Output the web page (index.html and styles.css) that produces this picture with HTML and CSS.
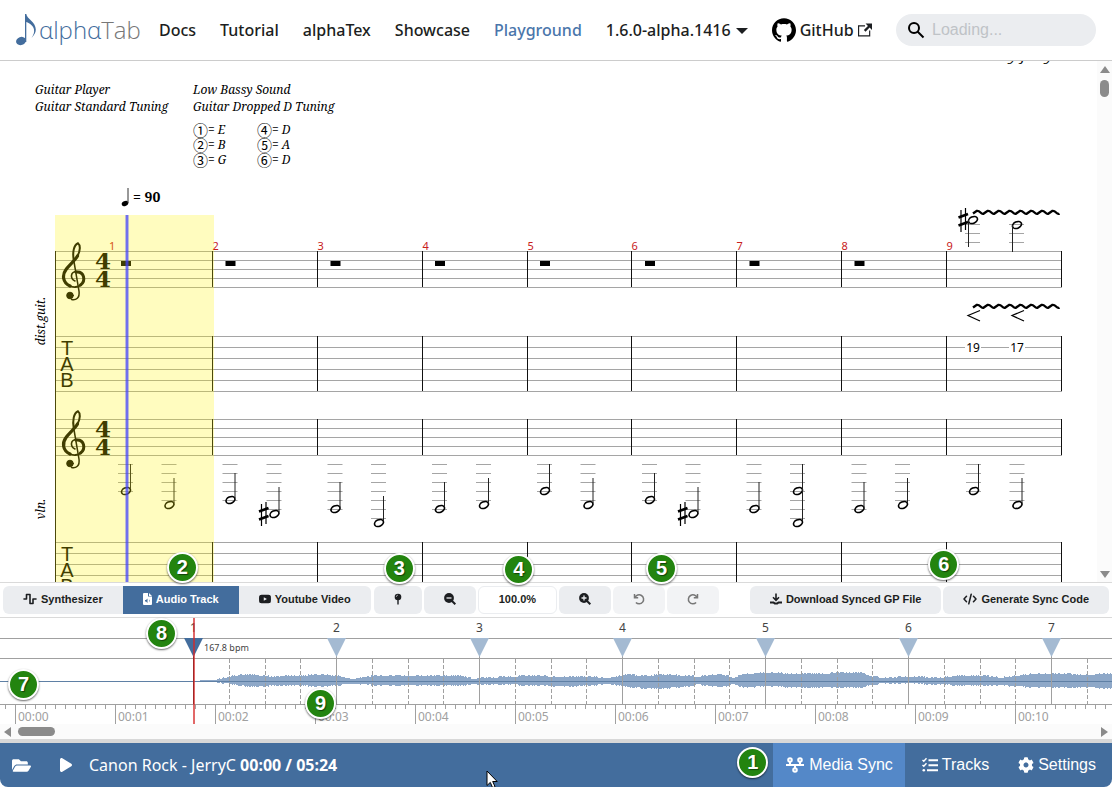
FILE: index.html
```html
<!DOCTYPE html>
<html lang="en">
  <head>
    <meta charset="UTF-8" />
    <meta name="viewport" content="width=device-width, initial-scale=1.0" />
    <title>Playground | alphaTab</title>
    <link rel="stylesheet" href="styles.css">
  </head>

  <body>
    <header class="navbar">
      <a class="logo" href="#">
        <svg width="23" height="34" viewBox="0 0 23 34">
          <ellipse cx="5" cy="28" rx="5" ry="4" transform="rotate(-20 5 28)" />
          <path d="M9 1h1.300c.5 5 9.500 8 9.500 15.500 0 3-1.500 5.500-4.300 8.500 2-3 3-5.500 2.500-8.500-.5-3.500-4-6-7.700-7.500V29H9z" />
        </svg>
        <span class="logo-alpha">αlphα</span><span class="logo-tab">Tab</span>
      </a>
      <nav>
        <a href="#">Docs</a>
        <a href="#">Tutorial</a>
        <a href="#">alphaTex</a>
        <a href="#">Showcase</a>
        <a class="active" href="#">Playground</a>
        <a class="dropdown" href="#">1.6.0-alpha.1416</a>
        <a class="github" href="#">
          <svg width="24" height="24" viewBox="0 0 24 24"><path fill="#000" d="M12 .297c-6.63 0-12 5.373-12 12 0 5.303 3.438 9.800 8.205 11.385.6.113.82-.258.82-.577 0-.285-.01-1.040-.015-2.040-3.338.724-4.042-1.610-4.042-1.610C4.422 18.070 3.633 17.700 3.633 17.700c-1.087-.744.084-.729.084-.729 1.205.084 1.838 1.236 1.838 1.236 1.070 1.835 2.809 1.305 3.495.998.108-.776.417-1.305.76-1.605-2.665-.3-5.466-1.332-5.466-5.930 0-1.310.465-2.380 1.235-3.220-.135-.303-.54-1.523.105-3.176 0 0 1.005-.322 3.300 1.230.96-.267 1.980-.399 3-.405 1.020.006 2.040.138 3 .405 2.280-1.552 3.285-1.230 3.285-1.230.645 1.653.24 2.873.12 3.176.765.84 1.230 1.910 1.230 3.220 0 4.610-2.805 5.625-5.475 5.920.42.36.81 1.096.81 2.220 0 1.606-.015 2.896-.015 3.286 0 .315.21.69.825.57C20.565 22.092 24 17.592 24 12.297c0-6.627-5.373-12-12-12" /></svg>
          GitHub
          <svg width="14" height="14" viewBox="0 0 24 24"><path fill="currentColor" d="M21 13v10h-21v-19h12v2h-10v15h17v-8h2zm3-12h-10.988l4.035 4-6.977 7.070 2.828 2.828 6.977-7.070 4.125 4.172v-11z" /></svg>
        </a>
      </nav>
      <div class="search">
        <svg width="18" height="18" viewBox="0 0 18 18" fill="none" stroke="#000" stroke-width="2"><circle cx="7" cy="7" r="5" /><path d="M10.500 10.500l6 6" /></svg>
        <input type="search" placeholder="Loading..." aria-label="Search" />
      </div>
    </header>

    <main class="viewer">
      <div class="score">
        <p class="score-author">Music by JerryC</p>
        <div class="score-info">
          <div>
            <p>Guitar Player</p>
            <p>Guitar Standard Tuning</p>
          </div>
          <div>
            <p>Low Bassy Sound</p>
            <p>Guitar Dropped D Tuning</p>
            <div class="tuning">
              <span><b>①</b>= E</span>
              <span><b>④</b>= D</span>
              <span><b>②</b>= B</span>
              <span><b>⑤</b>= A</span>
              <span><b>③</b>= G</span>
              <span><b>⑥</b>= D</span>
            </div>
          </div>
        </div>
        <svg id="notation" width="1097" height="402" viewBox="0 180 1097 402"></svg>
      </div>
      <div class="scrollbar-y">
        <i class="arrow up"></i>
        <i class="thumb"></i>
        <i class="arrow down"></i>
      </div>
    </main>

    <section class="sync">
      <div class="toolbar">
        <div class="group">
          <button>
            <svg width="14" height="12" viewBox="0 0 14 12" fill="none" stroke="currentColor" stroke-width="1.600" stroke-linecap="round" stroke-linejoin="round"><path d="M1 6h2.500V1.500H7v9h3V6h3" /></svg>
            Synthesizer
          </button>
          <button class="selected">
            <svg width="9" height="12" viewBox="0 0 9 12"><path fill="#fff" d="M1 0h4v3.500h4V11a1 1 0 0 1-1 1H1a1 1 0 0 1-1-1V1a1 1 0 0 1 1-1zM6 0l3 3H6z" /><path d="M2 7h1l1.500-1.500v4.500L3 8.500H2zM6 6.300q1.400 1.500 0 3" fill="#436d9d" /></svg>
            Audio Track
            <span class="callout over-audio">2</span>
          </button>
          <button>
            <svg width="12" height="12" viewBox="14 64 548 384"><path fill="currentColor" d="M549.655 124.083c-6.281-23.650-24.787-42.276-48.284-48.597C458.781 64 288 64 288 64S117.220 64 74.629 75.486c-23.497 6.322-42.003 24.947-48.284 48.597-11.412 42.867-11.412 132.305-11.412 132.305s0 89.438 11.412 132.305c6.281 23.650 24.787 41.500 48.284 47.821C117.220 448 288 448 288 448s170.780 0 213.371-11.486c23.497-6.321 42.003-24.171 48.284-47.821 11.412-42.867 11.412-132.305 11.412-132.305s0-89.438-11.412-132.305zm-317.510 213.508V175.185l142.739 81.205-142.739 81.201z" /></svg>
            Youtube Video
          </button>
        </div>
        <button aria-label="Add sync point">
          <svg width="8" height="12" viewBox="0 0 8 12"><circle cx="4" cy="4" r="3.300" fill="currentColor" /><path d="M3.300 7h1.400v4.500H3.300z" fill="currentColor" /><path d="M2.300 3.800a1.700 1.700 0 0 1 1.500-1.600" fill="none" stroke="#ebedf0" stroke-width=".7" /></svg>
          <span class="callout over-button">3</span>
        </button>
        <button aria-label="Zoom out">
          <svg width="12" height="12" viewBox="0 0 12 12" fill="none" stroke="currentColor"><circle cx="5" cy="5" r="4.900" fill="currentColor" stroke="none" /><path d="M8 8l3.300 3.300" stroke-width="2" /><path d="M2.500 5h5" stroke="#ebedf0" stroke-width="1.300" /></svg>
        </button>
        <button class="zoom-level">
          100.0%
          <span class="callout over-button">4</span>
        </button>
        <button aria-label="Zoom in">
          <svg width="12" height="12" viewBox="0 0 12 12" fill="none" stroke="currentColor"><circle cx="5" cy="5" r="4.900" fill="currentColor" stroke="none" /><path d="M8 8l3.300 3.300" stroke-width="2" /><path d="M2.500 5h5M5 2.500v5" stroke="#ebedf0" stroke-width="1.300" /></svg>
        </button>
        <button class="disabled" aria-label="Undo">
          <svg width="12" height="12" viewBox="0 0 12 12" fill="none" stroke="currentColor" stroke-width="1.500"><path d="M1.500 1v3.700h3.700" /><path d="M2 4.500a4.500 4.500 0 1 1 .9 5" /></svg>
          <span class="callout over-undo">5</span>
        </button>
        <button class="disabled" aria-label="Redo">
          <svg width="12" height="12" viewBox="0 0 12 12" fill="none" stroke="currentColor" stroke-width="1.500"><path d="M10.500 1v3.700H6.800" /><path d="M10 4.500a4.500 4.500 0 1 0-.9 5" /></svg>
        </button>
        <div class="spacer"></div>
        <button>
          <svg width="12" height="12" viewBox="0 0 12 12" fill="none" stroke="currentColor" stroke-width="1.600"><path d="M6 .5v6M3 4.300l3 3 3-3" /><path d="M0 9.500h3.500l1.300 1h2.400l1.300-1H12" stroke-width="2.200" /></svg>
          Download Synced GP File
        </button>
        <button>
          <svg width="14" height="12" viewBox="0 0 14 12" fill="none" stroke="currentColor" stroke-width="1.500" stroke-linecap="round" stroke-linejoin="round"><path d="M3.500 3.200L1 6l2.500 2.800M10.500 3.200L13 6l-2.500 2.800M8.200 1.200L5.800 10.800" /></svg>
          Generate Sync Code
          <span class="callout over-generate">6</span>
        </button>
      </div>

      <div class="timeline">
        <svg id="timeline" width="100%" height="106"></svg>
        <span class="callout on-wave">7</span>
        <span class="callout on-marker">8</span>
        <span class="callout on-ruler">9</span>
      </div>
      <div class="scrollbar-x">
        <i class="arrow left"></i>
        <i class="thumb"></i>
        <i class="arrow right"></i>
      </div>
    </section>

    <footer class="player">
      <button aria-label="Open file">
        <svg width="19" height="17" viewBox="0 0 576 512"><path fill="currentColor" d="M572.694 292.093L500.270 416.248A63.997 63.997 0 0 1 444.989 448H45.025c-18.523 0-30.064-20.093-20.731-36.093l72.424-124.155A64 64 0 0 1 152 256h399.964c18.523 0 30.064 20.093 20.730 36.093zM152 224h328v-48c0-26.510-21.490-48-48-48H272l-64-64H48C21.490 64 0 85.490 0 112v278.046l69.077-118.418C86.214 242.250 117.989 224 152 224z" /></svg>
      </button>
      <button aria-label="Play">
        <svg width="12" height="16" viewBox="0 0 384 512"><path fill="currentColor" d="M73 39c-14.800-9.100-33.400-9.400-48.500-.9S0 62.600 0 80V432c0 17.400 9.400 33.400 24.500 41.900s33.700 8.100 48.500-.9L361 297c14.300-8.700 23-24.200 23-41s-8.700-32.200-23-41L73 39z" /></svg>
      </button>
      <div class="song">Canon Rock - JerryC <b>00:00 / 05:24</b></div>
      <svg class="pointer" width="12" height="19" viewBox="0 0 12 19"><path d="M1 1v14.500l3.300-3.100 2.300 5.300 2.400-1-2.300-5.200h4.500z" fill="#fff" stroke="#000" /></svg>
      <div class="spacer"></div>
      <button class="active">
        <svg width="20" height="16" viewBox="0 0 20 16" fill="none" stroke="currentColor" stroke-width="2"><circle cx="5" cy="3" r="1.800" /><circle cx="15" cy="3" r="1.800" /><circle cx="10" cy="13" r="1.800" /><path d="M1 8h18M5 5v3M15 5v3M10 8v3" /></svg>
        Media Sync
        <span class="callout by-media">1</span>
      </button>
      <button>
        <svg width="16" height="16" viewBox="0 0 16 16" fill="none" stroke="currentColor"><path d="M6.500 3.200H16M6.500 8.200H16M5 13.200h11" stroke-width="2" /><path d="M.5 3l1.300 1.300L4.500 1.300M.5 8l1.300 1.300 2.700-3" stroke-width="1.400" /><circle cx="1.800" cy="13.200" r="1.300" fill="currentColor" stroke="none" /></svg>
        Tracks
      </button>
      <button>
        <svg width="16" height="16" viewBox="0 0 512 512"><path fill="currentColor" d="M487.400 315.700l-42.600-24.600c4.300-23.200 4.300-47 0-70.200l42.600-24.600c4.900-2.800 7.100-8.600 5.500-14-11.100-35.600-30-67.800-54.700-94.600-3.800-4.100-10-5.100-14.800-2.300L380.800 110c-17.900-15.400-38.500-27.300-60.800-35.100V25.800c0-5.600-3.900-10.500-9.400-11.700-36.700-8.200-74.300-7.800-109.200 0-5.500 1.200-9.400 6.100-9.400 11.700V75c-22.200 7.900-42.800 19.800-60.800 35.100L88.700 85.500c-4.900-2.800-11-1.900-14.800 2.300-24.700 26.700-43.600 58.900-54.700 94.600-1.700 5.400.6 11.200 5.500 14L67.300 221c-4.300 23.200-4.300 47 0 70.200l-42.600 24.600c-4.900 2.800-7.100 8.600-5.500 14 11.100 35.600 30 67.800 54.700 94.600 3.800 4.100 10 5.100 14.800 2.300l42.600-24.600c17.900 15.400 38.500 27.300 60.800 35.100v49.200c0 5.600 3.900 10.500 9.400 11.700 36.700 8.200 74.300 7.800 109.200 0 5.500-1.200 9.400-6.100 9.400-11.700v-49.200c22.200-7.900 42.800-19.800 60.800-35.100l42.600 24.600c4.900 2.800 11 1.900 14.800-2.300 24.700-26.700 43.600-58.900 54.700-94.600 1.500-5.500-.7-11.300-5.600-14.100zM256 336c-44.100 0-80-35.900-80-80s35.900-80 80-80 80 35.900 80 80-35.900 80-80 80z" /></svg>
        Settings
      </button>
    </footer>

    <script src="script.js"></script>
  </body>
</html>
```
FILE: styles.css
```css
* {
  box-sizing: border-box;
}

body {
  margin: 0;
  height: 100vh;
  display: flex;
  flex-direction: column;
  overflow: hidden;
  background-color: #fff;
  color: #1c1e21;
  font-family: "Noto Sans", "Open Sans", sans-serif;
  font-size: 16px;
}

p {
  margin: 0;
}

svg {
  display: block;
  flex: none;
}

button {
  position: relative;
  display: flex;
  align-items: center;
  justify-content: center;
  border: none;
  margin: 0;
  font-family: "Liberation Sans", Arial, sans-serif;
  white-space: nowrap;
  cursor: pointer;
}

.spacer {
  flex: 1;
}

/* Navbar */
.navbar {
  flex: none;
  display: flex;
  align-items: center;
  height: 61px;
  padding: 0 16px;
  border-bottom: 1px solid #ccc;
}

.logo {
  display: flex;
  align-items: center;
  width: 120px;
  margin-right: 11px;
  font-family: "Open Sans", "Noto Sans", sans-serif;
  font-size: 24px;
  font-weight: 300;
  line-height: 34px;
  text-decoration: none;
}

.logo svg,
.logo-alpha {
  fill: #436d9d;
  color: #436d9d;
}

.logo-tab {
  color: #777;
}

nav {
  display: flex;
  flex: 1;
}

nav a {
  display: flex;
  align-items: center;
  padding: 0 12px;
  color: #1c1e21;
  font-weight: 500;
  line-height: 24px;
  text-decoration: none;
  white-space: nowrap;
}

nav a.active {
  color: #4a76ab;
}

.dropdown::after {
  content: "";
  margin: 2px 0 0 5px;
  border: 6px solid transparent;
  border-top-color: currentColor;
  border-bottom: none;
}

.github {
  gap: 4px;
}

.search {
  position: relative;
  width: 200px;
}

.search svg {
  position: absolute;
  left: 11px;
  top: 7px;
}

.search input {
  width: 100%;
  height: 32px;
  padding: 0 8px 0 36px;
  border: none;
  border-radius: 16px;
  background-color: #ebedf0;
  font-family: "Liberation Sans", Arial, sans-serif;
  font-size: 16px;
}

.search input::placeholder {
  color: #bfc3c7;
}

/* Score */
.viewer {
  flex: 1;
  min-height: 0;
  display: flex;
}

.score {
  flex: 1;
  overflow: hidden;
  color: #000;
  font-family: "Noto Serif", "DejaVu Serif Condensed", "DejaVu Serif", serif;
  font-size: 12px;
  font-style: italic;
}

.score-author {
  margin-top: -15px;
  padding-right: 35px;
  font-size: 14px;
  line-height: 18px;
  text-align: right;
}

.score-info {
  display: flex;
  height: 116px;
  padding: 17px 0 0 35px;
  line-height: 17px;
}

.score-info > div:first-child {
  width: 158px;
}

.tuning {
  display: grid;
  grid-template-columns: 64px 64px;
  margin-top: 7px;
  line-height: 15px;
}

.tuning span {
  display: flex;
  height: 15px;
}

.tuning b {
  width: 15px;
  font-family: "Noto Sans CJK JP", "DejaVu Sans", sans-serif;
  font-size: 15px;
  font-style: normal;
  font-weight: normal;
}

.bar-number {
  fill: #c8201c;
  font: 11px "Noto Sans", sans-serif;
}

.fret {
  font: 12px "Noto Sans", sans-serif;
  text-anchor: middle;
}

.tab-letter {
  font: 20px "Liberation Sans", Arial, sans-serif;
  text-anchor: middle;
}

.time-signature {
  font: bold 23px "DejaVu Serif", serif;
  text-anchor: middle;
}

.tempo {
  font-size: 14px;
  font-style: normal;
  font-weight: bold;
}

.instrument {
  text-anchor: middle;
}

/* Scrollbars */
.scrollbar-y {
  display: flex;
  flex-direction: column;
  align-items: center;
  width: 15px;
  padding: 5px 0 4px;
  background-color: #fbfbfb;
}

.scrollbar-x {
  display: flex;
  align-items: center;
  height: 15px;
  padding: 0 4px;
  background-color: #fbfbfb;
}

.arrow {
  border: 5px solid transparent;
}

.arrow.up {
  border-bottom: 7px solid #8b8b8b;
  border-top: none;
}

.arrow.down {
  margin-top: auto;
  border-top: 7px solid #8b8b8b;
  border-bottom: none;
}

.arrow.left {
  border-right: 7px solid #8b8b8b;
  border-left: none;
}

.arrow.right {
  margin-left: auto;
  border-left: 7px solid #8b8b8b;
  border-right: none;
}

.thumb {
  border-radius: 5px;
  background-color: #8b8b8b;
}

.scrollbar-y .thumb {
  width: 9px;
  height: 17px;
  margin-top: 7px;
}

.scrollbar-x .thumb {
  width: 37px;
  height: 9px;
  margin-left: 7px;
}

/* Sync editor */
.sync {
  flex: none;
  border-bottom: 4px solid #d8d8d8;
}

.toolbar {
  display: flex;
  gap: 2px;
  height: 36px;
  padding: 3px;
  border-top: 1px solid #dadada;
  border-bottom: 1px solid #dadada;
}

.toolbar button {
  gap: 4px;
  height: 28px;
  padding: 0 20px 2px;
  border-radius: 6px;
  background-color: #ebedf0;
  color: #1c1e21;
  font-size: 11px;
  font-weight: bold;
}

.group {
  display: flex;
  margin-right: 1px;
}

.group button:first-child {
  border-radius: 6px 0 0 6px;
}

.group button:last-child {
  border-radius: 0 6px 6px 0;
}

.toolbar button.selected {
  border-radius: 0;
  background-color: #436d9d;
  color: #fff;
}

.toolbar button.zoom-level {
  border: 1px solid #ebedf0;
  background-color: #fff;
}

.toolbar button.disabled {
  background-color: #f2f3f5;
  color: #777;
}

.timeline {
  position: relative;
  height: 106px;
}

.timeline text {
  font: 12px "Noto Sans", sans-serif;
  fill: #444;
}

.timeline .time {
  fill: #a0a0a0;
}

.timeline .bpm {
  font-size: 9px;
}

.timeline .bar {
  text-anchor: middle;
}

/* Player bar */
.player {
  position: relative;
  flex: none;
  display: flex;
  gap: 5px;
  height: 44px;
  padding-right: 4px;
  border-radius: 0 0 8px 8px;
  background-color: #436d9d;
  color: #fff;
}

.player button {
  gap: 4px;
  padding: 0 12px;
  background-color: transparent;
  color: #fff;
  font-size: 16px;
}

.player button.active {
  background-color: #5488c8;
}

.song {
  line-height: 44px;
}

.pointer {
  position: absolute;
  left: 486px;
  top: 27px;
}

/* Numbered callouts */
.callout {
  position: absolute;
  z-index: 1;
  width: 31px;
  height: 31px;
  border: 2px solid #fff;
  border-radius: 50%;
  background-color: #23840f;
  box-shadow: 0 1px 2px rgba(0, 0, 0, 0.6);
  color: #fff;
  font-family: "Liberation Sans", Arial, sans-serif;
  font-size: 20px;
  font-weight: bold;
  line-height: 27px;
  text-align: center;
  text-shadow: 1px 1px 1px rgba(0, 0, 0, 0.5);
}

.over-audio {
  left: 44px;
  top: -34px;
}

.over-button {
  left: 50%;
  top: -33px;
  margin-left: -14px;
}

.over-undo {
  right: -12px;
  top: -33px;
}

.over-generate {
  left: -15px;
  top: -37px;
}

.on-wave {
  left: 8px;
  top: 51px;
}

.on-marker {
  left: 146px;
  top: 0;
}

.on-ruler {
  left: 305px;
  top: 70px;
}

.by-media {
  left: -36px;
  top: 4px;
}
```
FILE: script.js
```js
// Notation
const BARLINES = [212, 317, 422, 527, 631, 736, 841, 946, 1061];
const BEATS = [
  [126, 169.5], [230.5, 274.5], [335.5, 379], [440, 484], [545, 588.5],
  [650, 693.5], [754.5, 798], [859.5, 903], [974, 1017.5],
];
// y positions of the violin notes, one list per beat
const VIOLIN = [
  [[491], [505]], [[500], [514]], [[509], [523]], [[509], [505]], [[491], [505]],
  [[500], [514]], [[509], [491, 523]], [[509], [505]], [[491], [505]],
];

function line(x1, y1, x2, y2, color, extra = "") {
  return `<path d="M${x1} ${y1}L${x2} ${y2}" stroke="${color}" ${extra}/>`;
}

function text(x, y, value, cls) {
  return `<text x="${x}" y="${y}" class="${cls}">${value}</text>`;
}

function staff(top, count, gap) {
  let out = "";
  for (let i = 0; i < count; i++) {
    out += line(55, top + i * gap + 0.5, 1062, top + i * gap + 0.5, "#a5a5a5");
  }
  BARLINES.forEach((x) => {
    out += line(x + 0.5, top, x + 0.5, top + (count - 1) * gap, "#111");
  });
  return out;
}

function head(x, y) {
  return `<ellipse cx="${x}" cy="${y}" rx="4.700" ry="3.200" fill="none" stroke="#000" stroke-width="1.700" transform="rotate(-25 ${x} ${y})"/>`;
}

function ledger(x, y) {
  return line(x - 8, y + 0.5, x + 7, y + 0.5, "#a5a5a5");
}

function sharp(x, y) {
  return `<g transform="translate(${x} ${y})" stroke="#000" fill="none">
    <path d="M-2 -10V12M2.500 -12V10" stroke-width="1.200"/>
    <path d="M-4.500 -2.500L5 -6M-4.500 5.500L5 2" stroke-width="2.600"/></g>`;
}

function clef(dy) {
  return `<g transform="translate(0 ${dy})" fill="none" stroke="#000" stroke-linecap="round">
    <path d="M75 281C70 278.500 70 271.500 77 271.500" stroke-width="1.600"/>
    <path d="M76 272C84.500 271 86 281 80.500 285" stroke-width="3"/>
    <path d="M81 285C78 287.500 73 287.500 70 286" stroke-width="1.800"/>
    <path d="M70 286C62.500 282.500 62 275 66 269.500C69 265 75 260.500 77.500 256" stroke-width="3.200"/>
    <path d="M77.500 256C80.500 250.500 80.500 245 78 243.200C73.500 245 72.500 253 73.700 260" stroke-width="2"/>
    <path d="M73.700 260L79 291C80 298 76 300.500 71.500 299.500" stroke-width="1.500"/>
    <circle cx="70" cy="295.500" r="3.300" fill="#000" stroke-width="1"/></g>`;
}

function tabLetters(y) {
  return text(67, y, "T", "tab-letter") + text(67, y + 16, "A", "tab-letter") + text(67, y + 32, "B", "tab-letter");
}

function vibrato(x, y) {
  let d = `M${x} ${y + 1.5}`;
  for (let i = 0; i < 8; i++) {
    d += "l3.500 -2.500q2 -.5 4 1.500t3.300 1";
  }
  return `<path d="${d}" fill="none" stroke="#000" stroke-width="2.400"/>`;
}

function drawNotation() {
  let out = staff(251, 5, 9) + staff(336, 6, 11) + staff(419, 5, 9) + staff(542, 6, 11);
  out += line(55.5, 251, 55.5, 600, "#111");
  out += clef(0) + clef(168);
  [269, 287, 437, 455].forEach((y) => {
    out += text(103, y, "4", "time-signature");
  });
  out += tabLetters(355) + tabLetters(561);
  out += `<text class="instrument" transform="translate(45 321) rotate(-90)">dist.guit.</text>`;
  out += `<text class="instrument" transform="translate(45 509) rotate(-90)">vln.</text>`;

  // tempo
  out += `<ellipse cx="125" cy="203.500" rx="3.400" ry="2.500" transform="rotate(-25 125 203.500)"/>`;
  out += line(128, 188, 128, 203, "#333") + text(133, 202, "= 90", "tempo");

  out += text(109, 250, "1", "bar-number");
  BARLINES.slice(0, 8).forEach((x, i) => {
    out += text(x + 0.5, 250, i + 2, "bar-number");
  });

  BEATS.slice(0, 8).forEach((beats) => {
    out += `<rect x="${beats[0] - 5}" y="261" width="10" height="5"/>`;
  });

  VIOLIN.forEach((bar, i) => {
    bar.forEach((notes, j) => {
      const x = BEATS[i][j];
      const low = notes[notes.length - 1];
      for (let y = 464; y <= low; y += 9) {
        out += ledger(x, y);
      }
      notes.forEach((y) => {
        out += head(x, y);
      });
      out += line(x + 4.5, notes[0] - 27, x + 4.5, low - 2, "#222");
      if (low === 514) {
        out += sharp(x - 11, low);
      }
    });
  });

  // guitar notes of the last bar
  [[973, 220, 19], [1017, 225, 17]].forEach(([x, y, fret]) => {
    out += ledger(x, 224) + ledger(x, 233) + ledger(x, 242) + head(x, y);
    out += line(x - 4.5, y, x - 4.5, y + 27, "#222");
    out += `<path d="M${x + 7} 310.500L${x - 5} 315.500L${x + 7} 321" fill="none" stroke="#000" stroke-width="1.200"/>`;
    out += `<rect x="${x - 8}" y="342" width="16" height="10" fill="#fff"/>` + text(x, 352, fret, "fret");
  });
  out += sharp(963, 220) + vibrato(973, 212) + vibrato(973, 306);

  // current bar and beat cursor
  out += `<rect x="55" y="215" width="159" height="400" fill="#fff200" fill-opacity="0.250"/>`;
  out += `<rect x="125" y="215" width="4" height="400" fill="#4040ff" fill-opacity="0.350"/>`;
  out += `<rect x="126" y="215" width="2" height="400" fill="#4040ff" fill-opacity="0.600"/>`;
  document.getElementById("notation").innerHTML = out;
}

// Timeline
const PIXELS_PER_SECOND = 100;
const FIRST_BAR = 193;
const BAR_WIDTH = 143;
// x, height above the middle, height below
const ENVELOPE = [
  [195, 0, 0], [205, 1, 0], [217, 1, 1], [232, 5, 3], [248, 6, 5], [262, 5, 5], [275, 4, 4],
  [290, 5, 4], [325, 6, 5], [336, 5, 4], [347, 3, 3], [352, 2, 3], [365, 4, 3], [376, 5, 4],
  [420, 5, 4], [460, 5, 4], [473, 2, 3], [485, 3, 3], [493, 3, 3], [505, 4, 3], [530, 5, 4],
  [565, 4, 5], [590, 4, 4], [605, 3, 3], [612, 3, 3], [624, 6, 5], [645, 5, 7], [662, 6, 7],
  [690, 5, 5], [697, 4, 3], [720, 7, 6], [733, 3, 3], [745, 7, 6], [765, 8, 5], [800, 7, 6],
  [860, 8, 6], [872, 4, 3], [885, 3, 2], [908, 4, 2], [940, 3, 3], [960, 5, 4], [985, 5, 4],
  [1000, 3, 4], [1015, 5, 5], [1035, 7, 6], [1060, 7, 6], [1080, 6, 6], [1112, 7, 7],
];

function waveform(width) {
  let d = "";
  let seed = 7;
  for (let x = 196; x < width; x++) {
    let k = ENVELOPE.findIndex((point) => point[0] > x);
    if (k < 1) {
      k = ENVELOPE.length - 1;
    }
    const a = ENVELOPE[k - 1];
    const b = ENVELOPE[k];
    const t = Math.min(1, (x - a[0]) / (b[0] - a[0]));
    seed = (seed * 1103 + 12345) % 65536;
    const noise = x >= 215 && seed > 40000 ? 1 : 0;
    const up = Math.round(a[1] + (b[1] - a[1]) * t) + noise;
    const down = Math.round(a[2] + (b[2] - a[2]) * t) + noise;
    d += `M${x + 0.5} ${63 - up}V${63 + down}`;
  }
  return `<path d="${d}" stroke="#8ea8c8"/>`;
}

function drawTimeline() {
  const svg = document.getElementById("timeline");
  const width = svg.clientWidth || svg.parentElement.clientWidth;
  let out = waveform(width);
  out += line(0, 63.5, width, 63.5, "#5f80a5");
  [20.5, 40.5, 86.5].forEach((y) => {
    out += line(0, y, width, y, "#a0a0a0");
  });

  for (let x = 5, i = -1; x < width; x += PIXELS_PER_SECOND / 10, i++) {
    const second = i % 10 === 0;
    out += line(x + 0.5, 87, x + 0.5, second ? 106 : 91, "#a0a0a0");
    if (second) {
      out += text(x + 3, 103, "00:" + String(i / 10).padStart(2, "0"), "time");
    }
  }

  for (let bar = 0; FIRST_BAR + bar * BAR_WIDTH < width; bar++) {
    const x = FIRST_BAR + bar * BAR_WIDTH;
    out += text(x + 0.5, 14, bar + 1, "bar");
    out += line(x + 0.5, 38, x + 0.5, 86, bar === 0 ? "#222" : "#a0a0a0");
    out += `<path d="M${x - 9} 20H${x + 10}L${x + 0.5} 39z" fill="${bar === 0 ? "#436d9d" : "#a4bad2"}"/>`;
    for (let beat = 1; beat < 4; beat++) {
      const bx = Math.round(x + (beat * BAR_WIDTH) / 4) + 0.5;
      out += line(bx, 41, bx, 86, "#a0a0a0", 'stroke-dasharray="4 2"');
    }
  }
  out += text(204, 33, "167.8 bpm", "bpm");
  out += `<rect x="${FIRST_BAR}" y="0" width="2" height="106" fill="#d62828" fill-opacity="0.700"/>`;
  svg.innerHTML = out;
}

drawNotation();
drawTimeline();
window.addEventListener("resize", drawTimeline);
```
